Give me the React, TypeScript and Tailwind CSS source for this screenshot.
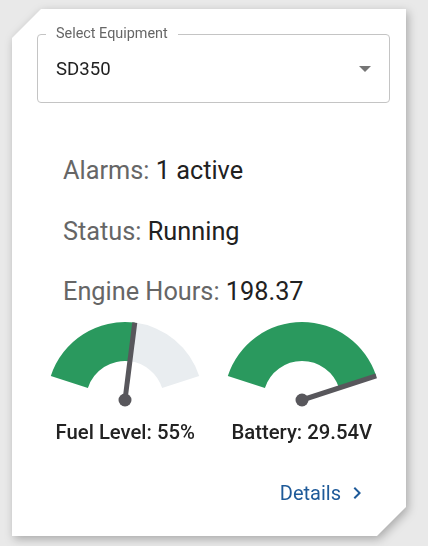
import React from "react";

const CX = 80;
const CY = 80;
const R_OUT = 78;
const R_IN = 39;
const START = 162;
const SPAN = 144;

function xy(r: number, deg: number): [number, number] {
  const a = (deg * Math.PI) / 180;
  return [CX + r * Math.cos(a), CY - r * Math.sin(a)];
}

function pt(r: number, deg: number) {
  const [x, y] = xy(r, deg);
  return `${x.toFixed(2)} ${y.toFixed(2)}`;
}

function ring(from: number, to: number) {
  const large = from - to > 180 ? 1 : 0;
  return `M ${pt(R_OUT, from)} A ${R_OUT} ${R_OUT} 0 ${large} 1 ${pt(R_OUT, to)} L ${pt(R_IN, to)} A ${R_IN} ${R_IN} 0 ${large} 0 ${pt(R_IN, from)} Z`;
}

function Gauge({ value, label }: { value: number; label: string }) {
  const v = Math.max(0, Math.min(1, value));
  const angle = START - v * SPAN;
  const [nx, ny] = xy(R_OUT, angle);
  return (
    <div className="flex flex-col items-center">
      <svg width="160" height="88" viewBox="0 0 160 88">
        {v < 1 && <path d={ring(angle, START - SPAN)} fill="#e9edf0" />}
        {v > 0 && <path d={ring(START, angle)} fill="#2a995e" />}
        <line x1={CX} y1={CY} x2={nx} y2={ny} stroke="#58575c" strokeWidth="5" />
        <circle cx={CX} cy={CY} r="6.5" fill="#58575c" />
      </svg>
      <div className="mt-[12px] text-[20.3px] leading-[24px] font-medium text-[#222]">{label}</div>
    </div>
  );
}

function InfoRow({ label, value }: { label: string; value: string }) {
  return (
    <div className="text-[25.3px] leading-[30px]">
      <span className="text-[#666]">{label}: </span>
      <span className="text-[#212121]">{value}</span>
    </div>
  );
}

export default function App() {
  return (
    <div className="min-h-screen bg-[#e9e9e9] pt-[9px] pl-[12px] font-['Roboto',sans-serif]">
      <div className="w-[394px] [filter:drop-shadow(2px_3px_5px_rgba(0,0,0,0.28))]">
        <div className="h-[527px] bg-white pt-[25px] pl-[25px] pr-[16px] [clip-path:polygon(29px_0,100%_0,100%_calc(100%_-_29px),calc(100%_-_29px)_100%,0_100%,0_29px)]">
          {/* Equipment select */}
          <div className="relative h-[69px] rounded-[4px] border border-[#c4c4c4] flex items-center justify-between pl-[18px] pr-[18px]">
            <span className="absolute top-[-9px] left-[8px] bg-white px-[10px] text-[14.4px] leading-[16px] text-[#666]">
              Select Equipment
            </span>
            <span className="text-[18.6px] leading-[24px] text-[#212121]">SD350</span>
            <svg width="12" height="6" viewBox="0 0 12 6">
              <polygon points="0,0 12,0 6,6" fill="#757575" />
            </svg>
          </div>

          {/* Info */}
          <div className="mt-[53px] pl-[26px] flex flex-col gap-[30.5px]">
            <InfoRow label="Alarms" value="1 active" />
            <InfoRow label="Status" value="Running" />
            <InfoRow label="Engine Hours" value="198.37" />
          </div>

          {/* Gauges */}
          <div className="mt-[13px] grid grid-cols-2">
            <Gauge value={0.55} label="Fuel Level: 55%" />
            <Gauge value={1} label="Battery: 29.54V" />
          </div>

          {/* Details link */}
          <div className="mt-[37px] flex justify-end pr-[21px]">
            <a className="flex items-center gap-[4px] text-[20px] leading-[24px] text-[#1e5a99] cursor-pointer">
              Details
              <svg width="24" height="24" viewBox="0 0 24 24" fill="currentColor">
                <path d="M10 6 8.59 7.41 13.17 12l-4.58 4.59L10 18l6-6z" />
              </svg>
            </a>
          </div>
        </div>
      </div>
    </div>
  );
}
